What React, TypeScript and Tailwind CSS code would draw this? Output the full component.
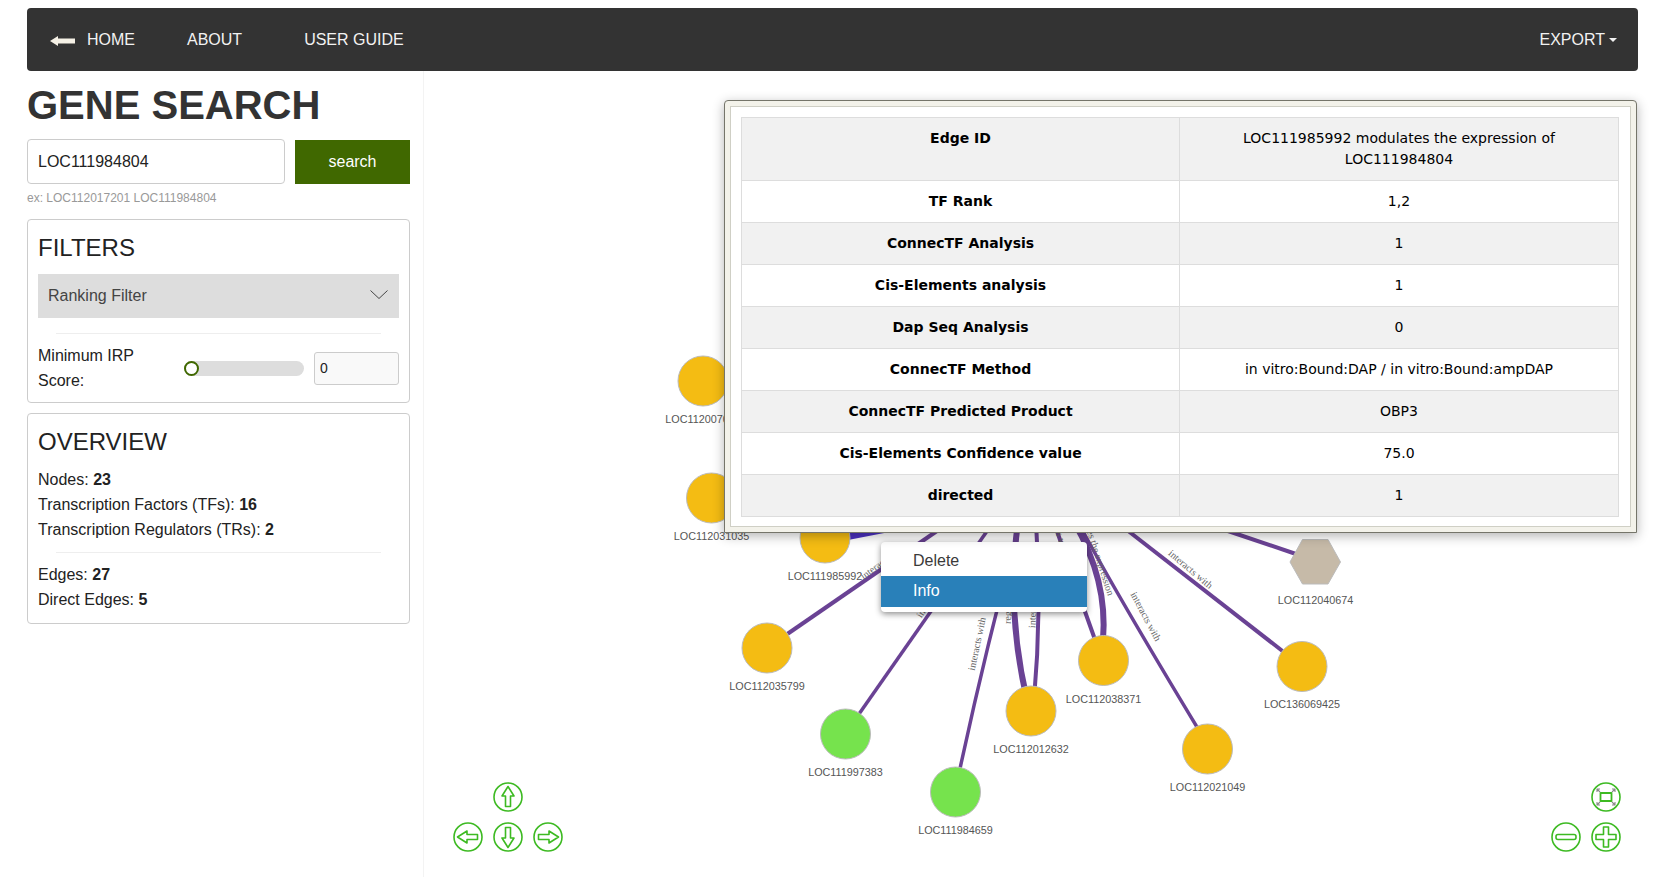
import React from 'react';

const SANS = { fontFamily: '"Liberation Sans", Arial, sans-serif' };

type GeneNode = { id: string; x: number; y: number; labelY: number; color: string };

const NODES: GeneNode[] = [
  { id: 'LOC112007000', x: 703, y: 381, labelY: 420, color: '#f4bc13' },
  { id: 'LOC112031035', x: 711.5, y: 498, labelY: 537, color: '#f4bc13' },
  { id: 'LOC111985992', x: 825, y: 538, labelY: 577, color: '#f4bc13' },
  { id: 'LOC112035799', x: 767, y: 648, labelY: 687, color: '#f4bc13' },
  { id: 'LOC111997383', x: 845.5, y: 734, labelY: 773, color: '#76e34d' },
  { id: 'LOC111984659', x: 955.5, y: 792, labelY: 831, color: '#76e34d' },
  { id: 'LOC112012632', x: 1031, y: 711, labelY: 750, color: '#f4bc13' },
  { id: 'LOC112038371', x: 1103.5, y: 660.5, labelY: 700, color: '#f4bc13' },
  { id: 'LOC112021049', x: 1207.5, y: 749, labelY: 788, color: '#f4bc13' },
  { id: 'LOC136069425', x: 1302, y: 666.5, labelY: 705, color: '#f4bc13' },
];

const EDGES = [
  { d: 'M767 648 L950 522', w: 4 },
  { d: 'M845 734 L992 524', w: 3.5 },
  { d: 'M955 792 Q985 650 1020 522', w: 3.5 },
  { d: 'M1027 700 Q1006 610 1018 522', w: 6 },
  { d: 'M1034 700 Q1042 610 1036 522', w: 4 },
  { d: 'M1098 648 Q1070 570 1054 522', w: 4 },
  { d: 'M1103 640 Q1108 580 1074 522', w: 6 },
  { d: 'M1200 732 Q1114 590 1078 522', w: 3.5 },
  { d: 'M1285 653 L1118 523', w: 4 },
  { d: 'M1296 554 L1225 530', w: 4 },
];

const EDGE_LABELS = [
  { text: 'interacts with', x: 1190, y: 570, r: 40 },
  { text: 'interacts with', x: 1145, y: 617, r: 62 },
  { text: 'modulates the expression', x: 1094.5, y: 547.5, r: 72 },
  { text: 'interacts with', x: 978, y: 644, r: -78 },
  { text: 'interacts with', x: 935, y: 595, r: -55 },
  { text: 'interacts with', x: 884, y: 562, r: -36 },
  { text: 'regulates', x: 1009, y: 606, r: -88 },
  { text: 'interacts with', x: 1034, y: 601, r: -88 },
  { text: 'interacts with', x: 1057, y: 530, r: 70 },
];

const EDGE_INFO = [
  ['TF Rank', '1,2'],
  ['ConnecTF Analysis', '1'],
  ['Cis-Elements analysis', '1'],
  ['Dap Seq Analysis', '0'],
  ['ConnecTF Method', 'in vitro:Bound:DAP / in vitro:Bound:ampDAP'],
  ['ConnecTF Predicted Product', 'OBP3'],
  ['Cis-Elements Confidence value', '75.0'],
  ['directed', '1'],
];

const GeneGraph = () => (
  <svg className="absolute inset-0 w-full h-full" viewBox="424 71 1239 806">
    {EDGES.map((e, i) => (
      <path key={i} d={e.d} fill="none" stroke="#6a4294" strokeWidth={e.w} />
    ))}
    <polygon points="848,528 910,528 848,540" fill="#4b30c0" />
    {EDGE_LABELS.map((l, i) => (
      <text
        key={i}
        x={l.x}
        y={l.y}
        transform={`rotate(${l.r} ${l.x} ${l.y})`}
        textAnchor="middle"
        dominantBaseline="middle"
        fontSize="10"
        fill="#666"
        fontFamily='"Liberation Serif", serif'
      >
        {l.text}
      </text>
    ))}
    {NODES.map((n) => (
      <g key={n.id}>
        <circle cx={n.x} cy={n.y} r="25" fill={n.color} stroke="#bbb" strokeWidth="1" />
        <text
          x={n.x}
          y={n.labelY}
          textAnchor="middle"
          dominantBaseline="middle"
          fontSize="10.8"
          fill="#555"
          fontFamily='"Liberation Sans", sans-serif'
        >
          {n.id}
        </text>
      </g>
    ))}
    <polygon
      points="1290,562 1302.5,539.5 1328,539.5 1340.5,562 1328,584 1302.5,584"
      fill="#c6baa8"
      stroke="#bbb"
      strokeWidth="1"
    />
    <text
      x="1315.5"
      y="601"
      textAnchor="middle"
      dominantBaseline="middle"
      fontSize="10.8"
      fill="#555"
      fontFamily='"Liberation Sans", sans-serif'
    >
      LOC112040674
    </text>
  </svg>
);

// round green button of the pan and zoom controls
const RoundIcon = ({ children }: { children?: React.ReactNode }) => (
  <svg width="32" height="32" viewBox="-16 -16 32 32" fill="none" stroke="#3dba22" strokeWidth="1.6" strokeLinejoin="round">
    <circle r="14" />
    {children}
  </svg>
);

const ARROW_UP = 'M0 -10.5 L6 -1 H2.5 V9.5 H-2.5 V-1 H-6 Z';

const PanControls = () => (
  <div className="absolute left-[28px] bottom-[24px] grid grid-cols-[32px_32px_32px] gap-x-[8px] gap-y-[8px]">
    <div />
    <RoundIcon>
      <path d={ARROW_UP} />
    </RoundIcon>
    <div />
    <RoundIcon>
      <path d={ARROW_UP} transform="rotate(-90)" />
    </RoundIcon>
    <RoundIcon>
      <path d={ARROW_UP} transform="rotate(180)" />
    </RoundIcon>
    <RoundIcon>
      <path d={ARROW_UP} transform="rotate(90)" />
    </RoundIcon>
  </div>
);

const ZoomControls = () => (
  <div className="absolute right-[41px] bottom-[24px] grid grid-cols-[32px_32px] gap-x-[8px] gap-y-[8px]">
    <div />
    <RoundIcon>
      <path
        d="M-6 -5 L-9 -8 M-9 -5 V-8 H-6 M6 -5 L9 -8 M6 -8 H9 V-5 M6 5 L9 8 M9 5 V8 H6 M-6 5 L-9 8 M-6 8 H-9 V5"
        stroke="#888"
        strokeWidth="1.1"
      />
      <rect x="-5.5" y="-4" width="11" height="8" strokeWidth="1.8" />
    </RoundIcon>
    <RoundIcon>
      <rect x="-10" y="-2.5" width="20" height="5" rx="2" />
    </RoundIcon>
    <RoundIcon>
      <path d="M-2.5 -10 H2.5 V-2.5 H10 V2.5 H2.5 V10 H-2.5 V2.5 H-10 V-2.5 H-2.5 Z" />
    </RoundIcon>
  </div>
);

const EdgeInfoPopup = () => (
  <div className="absolute left-[300px] top-[29px] w-[913px] h-[433px] bg-[#f3f2ea] border border-[#75756a] rounded-t-[4px] p-[5px] shadow-[0_3px_12px_rgba(0,0,0,0.3)]">
    <div className="h-full bg-white border border-[#cfcfc5] pl-[10px] pr-[11px] py-[10px]">
      <table
        className="w-full table-fixed border-collapse text-[14px] leading-[21px] text-black text-center"
        style={{ fontFamily: '"DejaVu Sans", Verdana, sans-serif' }}
      >
        <tbody>
          <tr className="bg-[#f1f1f1]">
            <td className="w-[438px] border border-[#ddd] px-[10px] py-[10px] font-bold align-top">Edge ID</td>
            <td className="border border-[#ddd] px-[60px] py-[10px] align-top">
              LOC111985992 modulates the expression of LOC111984804
            </td>
          </tr>
          {EDGE_INFO.map(([label, value], i) => (
            <tr key={label} className={i % 2 === 1 ? 'bg-[#f1f1f1]' : 'bg-white'}>
              <td className="border border-[#ddd] px-[10px] py-[10px] font-bold align-top">{label}</td>
              <td className="border border-[#ddd] px-[10px] py-[10px] align-top">{value}</td>
            </tr>
          ))}
        </tbody>
      </table>
    </div>
  </div>
);

const ContextMenu = () => (
  <div className="absolute left-[457px] top-[471px] w-[206px] rounded-[4px] bg-white pt-[5px] pb-[5px] text-[16px] shadow-[0_2px_6px_rgba(0,0,0,0.45)]">
    <div className="h-[29px] leading-[27px] pl-[32px] text-[#3a3a3a]">Delete</div>
    <div className="h-[31px] leading-[29px] pl-[32px] text-white bg-[#2980b9]">Info</div>
  </div>
);

const App: React.FC = () => {
  return (
    <div className="h-screen w-full bg-white overflow-hidden pt-[8px] flex flex-col text-[16px] text-[#333]" style={SANS}>
      {/* Top bar */}
      <nav className="ml-[27px] mr-[25px] h-[63px] shrink-0 bg-[#333333] rounded-[4px] flex items-center pl-[23px] pr-[21px] text-[#f2f2f2]">
        <svg width="25" height="10" viewBox="0 0 25 10" className="mt-[2px]">
          <path d="M0 5 L8 0 V2.5 H25 V7.5 H8 V10 Z" fill="#f5f1e6" />
        </svg>
        <span className="ml-[12px]">HOME</span>
        <span className="ml-[52px]">ABOUT</span>
        <span className="ml-[62px]">USER GUIDE</span>
        <span className="ml-auto">EXPORT</span>
        <span className="ml-[4px] w-0 h-0 border-x-[4px] border-x-transparent border-t-[4px] border-t-[#f2f2f2]" />
      </nav>

      <div className="flex flex-1 min-h-0">
        {/* Sidebar */}
        <aside className="w-[424px] shrink-0 border-r border-[#f3f3f3] pl-[27px] pr-[13px]">
          <h1 className="mt-[11px] h-[46px] leading-[46px] text-[40px] font-bold text-[#333] whitespace-nowrap">GENE SEARCH</h1>
          <div className="mt-[11px] flex items-center gap-[10px]">
            <input
              readOnly
              value="LOC111984804"
              className="w-[258px] h-[45px] border border-[#ccc] rounded-[4px] pl-[10px] text-[16px] text-[#222] outline-none"
            />
            <button className="w-[115px] h-[44px] bg-[#406800] text-white text-[16px]">search</button>
          </div>
          <p className="mt-[5px] h-[18px] leading-[18px] text-[12px] text-[#999]">ex: LOC112017201 LOC111984804</p>

          <section className="mt-[12px] h-[184px] border border-[#ccc] rounded-[4px] px-[10px] pt-[13px]">
            <h2 className="h-[30px] leading-[30px] text-[24px] text-[#222]">FILTERS</h2>
            <div className="mt-[11px] h-[44px] bg-[#dddddd] flex items-center justify-between pl-[10px] pr-[11px] text-[#444]">
              <span>Ranking Filter</span>
              <svg width="18" height="9" viewBox="0 0 18 9" fill="none" stroke="#444" strokeWidth="1" className="mb-[3px]">
                <path d="M0.5 0.5 L9 8.5 L17.5 0.5" />
              </svg>
            </div>
            <hr className="mt-[15px] mx-[18px] border-t border-[#eee]" />
            <div className="mt-[9px] flex items-center">
              <label className="w-[146px] leading-[25px] text-[#222]">
                Minimum IRP
                <br />
                Score:
              </label>
              <div className="relative w-[120px] h-[15px] rounded-full bg-[#dddddd]">
                <div className="absolute left-0 top-0 w-[15px] h-[15px] rounded-full bg-white border-[2.5px] border-[#406800]" />
              </div>
              <input
                readOnly
                value="0"
                className="ml-[10px] w-[85px] h-[33px] border border-[#ccc] rounded-[3px] bg-[#f9f9f9] pl-[5px] text-[14px] text-[#222] outline-none"
              />
            </div>
          </section>

          <section className="mt-[10px] h-[211px] border border-[#ccc] rounded-[4px] px-[10px] pt-[13px] leading-[25px] text-[#222]">
            <h2 className="h-[30px] leading-[30px] text-[24px]">OVERVIEW</h2>
            <p className="mt-[10px]">
              Nodes: <b>23</b>
            </p>
            <p>
              Transcription Factors (TFs): <b>16</b>
            </p>
            <p>
              Transcription Regulators (TRs): <b>2</b>
            </p>
            <hr className="mt-[10px] mx-[18px] border-t border-[#eee]" />
            <p className="mt-[9px]">
              Edges: <b>27</b>
            </p>
            <p>
              Direct Edges: <b>5</b>
            </p>
          </section>
        </aside>

        {/* Network canvas */}
        <main className="relative flex-1 min-w-0">
          <GeneGraph />
          <ContextMenu />
          <EdgeInfoPopup />
          <PanControls />
          <ZoomControls />
        </main>
      </div>
    </div>
  );
};

export default App;
